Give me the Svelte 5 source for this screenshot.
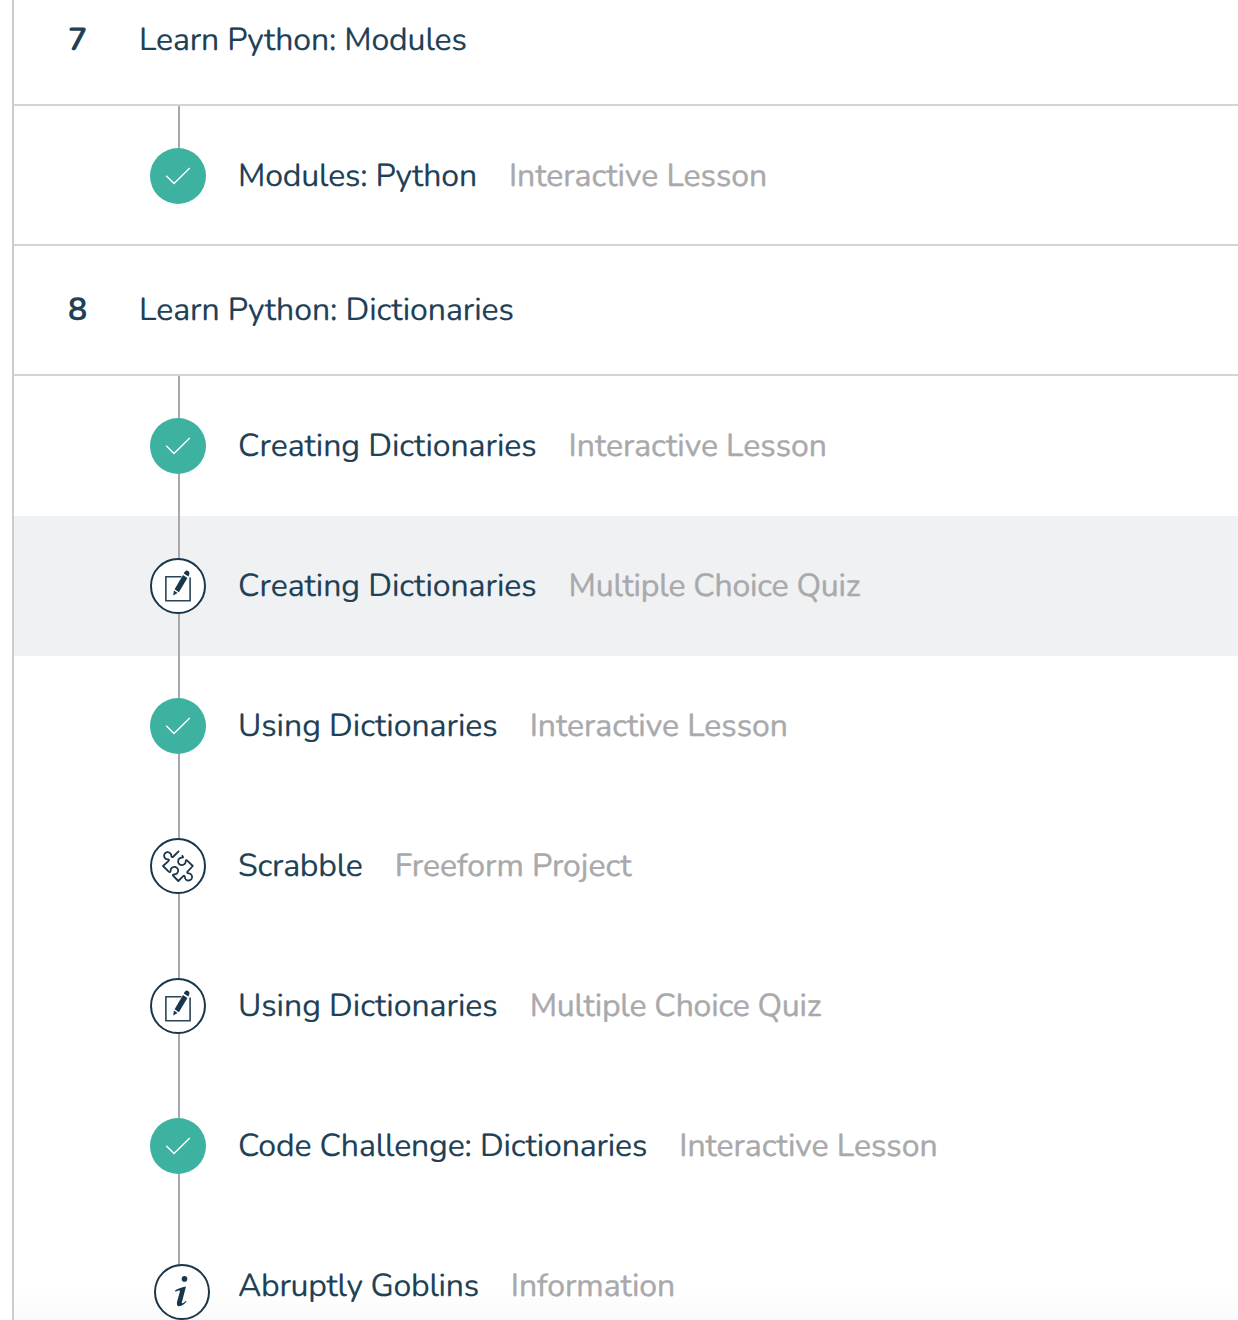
<script>
  // `tracking` holds the letter spacing of a label, in pixels.
  const kinds = {
    lesson: { label: 'Interactive Lesson', tracking: -0.03 },
    quiz: { label: 'Multiple Choice Quiz', tracking: -0.21 },
    project: { label: 'Freeform Project', tracking: -0.03 },
    info: { label: 'Information', tracking: -0.05 }
  };

  const sections = [
    {
      number: 7,
      title: 'Learn Python: Modules',
      tracking: -0.14,
      items: [{ icon: 'check', title: 'Modules: Python', kind: kinds.lesson, tracking: -0.18 }]
    },
    {
      number: 8,
      title: 'Learn Python: Dictionaries',
      tracking: -0.05,
      items: [
        { icon: 'check', title: 'Creating Dictionaries', kind: kinds.lesson, tracking: -0.06 },
        { icon: 'quiz', title: 'Creating Dictionaries', kind: kinds.quiz, tracking: -0.06, active: true },
        { icon: 'check', title: 'Using Dictionaries', kind: kinds.lesson, tracking: -0.04 },
        { icon: 'project', title: 'Scrabble', kind: kinds.project, tracking: -0.22 },
        { icon: 'quiz', title: 'Using Dictionaries', kind: kinds.quiz, tracking: -0.04 },
        { icon: 'check', title: 'Code Challenge: Dictionaries', kind: kinds.lesson, tracking: -0.14 },
        { icon: 'info', title: 'Abruptly Goblins', kind: kinds.info, tracking: -0.28 }
      ]
    }
  ];
</script>

<main class="syllabus">
  {#each sections as section}
    <section>
      <header class="heading">
        <span class="number">{section.number}</span>
        <h2 style:letter-spacing="{section.tracking}px">{section.title}</h2>
      </header>
      <ul>
        {#each section.items as item}
          <li class="item {item.icon}" class:active={item.active}>
            <div class="rail">
              <span class="line"></span>
              <svg class="icon" viewBox="0 0 56 56" width="56" height="56" aria-hidden="true">
                {#if item.icon === 'check'}
                  <circle cx="28" cy="28" r="28" fill="#3db2a0" />
                  <path d="M16.2 27.8 L24 35.6 L39.8 20" fill="none" stroke="#fff" stroke-width="1.4" />
                {:else}
                  <circle cx="28" cy="28" r="27" fill="#fff" stroke="#19364a" stroke-width="2" />
                  {#if item.icon === 'quiz'}
                    <path d="M31.5 18.8 H15.9 V42.7 H40.1 V19.5" fill="none" stroke="#294558" stroke-width="1.6" />
                    <path d="M33 17.1 L37.4 20.1 L28.9 34.2 L24.6 31.2Z" fill="#19364a" />
                    <path d="M33.8 15.4 L34.4 14.3 Q36 11.7 38.3 13.1 Q40.3 14.6 39.1 17.1 L38.3 18.5Z" fill="#19364a" />
                    <path d="M23.9 32.5 L27.6 35.1 L23.2 37.4Z" fill="#19364a" />
                  {:else if item.icon === 'project'}
                    <path
                      d="M28.6 13.3 L23.4 18.5 C22.3 19.5 21.4 19.4 21.3 18 A3.6 3.6 0 1 0 17.8 21.4 C19.2 21.5 19.4 22.2 18.4 23.2 L13 28 L18.7 33.6 C19.7 34.5 20.5 34.2 20.6 33 A3.8 3.8 0 1 1 24.2 36.4 C22.7 36.5 22.4 37 23.4 38 L28.3 43 L33 38.3 C34 37.3 34.8 37.6 34.9 39 A3.6 3.6 0 1 0 38.4 35.3 C37 35.2 36.7 34.4 37.7 33.4 L42.8 28 L37.5 22.8 C36.5 21.8 35.8 22 35.7 23.2 A3.8 3.8 0 1 1 32 19.6 C33.4 19.5 33.4 18.8 32.3 17.8"
                      fill="none"
                      stroke="#19364a"
                      stroke-width="1.8"
                      stroke-linecap="round"
                      stroke-linejoin="round"
                    />
                  {:else}
                    <circle cx="30.5" cy="14.9" r="2.8" fill="#19364a" />
                    <path
                      d="M21 26.6 C23.8 24.4 27.2 23.6 32 22.4 L27.9 38.2 C27.5 40 28.8 39.8 31.8 36.9 L32.6 37.6 C29.6 41.9 22.8 44.5 22.9 39.4 C23 37.3 25.3 30.6 25.9 27.6 C26.1 25.8 24.5 26.3 21.5 27.8Z"
                      fill="#19364a"
                    />
                  {/if}
                {/if}
              </svg>
            </div>
            <span class="title" style:letter-spacing="{item.tracking}px">{item.title}</span>
            <span class="kind" style:letter-spacing="{item.kind.tracking}px">{item.kind.label}</span>
          </li>
        {/each}
      </ul>
    </section>
  {/each}
</main>

<style>
  :global(body) {
    overflow: hidden;
    background: #fff;
  }
  .syllabus {
    box-sizing: border-box;
    height: 1320px;
    margin-left: 12px;
    border-left: 2px solid #ccc;
    overflow: hidden;
    background: linear-gradient(#fff 1290px, #fafafa 1320px);
    font-family: Nunito, Lato, sans-serif;
    font-size: 32px;
    line-height: 40px;
    color: #204056;
    white-space: nowrap;
    text-rendering: geometricPrecision;
  }
  section:first-child {
    margin-top: -24px;
  }
  section:first-child ul {
    border-bottom: 2px solid #d4d4d4;
  }
  section:first-child .item {
    height: 138px;
  }
  .heading {
    box-sizing: border-box;
    height: 130px;
    padding: 45px 0 0 54px;
    display: flex;
    border-bottom: 2px solid #d4d4d4;
  }
  .number {
    width: 71px;
    font-weight: 700;
  }
  h2 {
    margin: 0;
    font-size: 32px;
    font-weight: 400;
  }
  h2,
  .title {
    -webkit-text-stroke: 0.15px #204056;
  }
  ul {
    margin: 0;
    padding: 0;
    list-style: none;
  }
  .item {
    height: 140px;
    display: flex;
    align-items: flex-start;
    padding-left: 136px;
  }
  .active {
    background: #f0f1f3;
  }
  .rail {
    position: relative;
    width: 56px;
    height: 100%;
    padding-top: 42px;
    box-sizing: border-box;
    margin-right: 32px;
  }
  .line {
    position: absolute;
    left: 28px;
    top: 0;
    bottom: 0;
    width: 2px;
    background: #a9a9ad;
  }
  section:first-child .line {
    bottom: 50%;
  }
  .icon {
    display: block;
    position: relative;
  }
  .info .icon {
    left: 4px;
    top: 6px;
  }
  .title,
  .kind {
    padding-top: 51px;
  }
  .kind {
    margin-left: 32px;
    color: #a9a9ac;
    -webkit-text-stroke: 0.4px #a9a9ac;
  }
</style>
